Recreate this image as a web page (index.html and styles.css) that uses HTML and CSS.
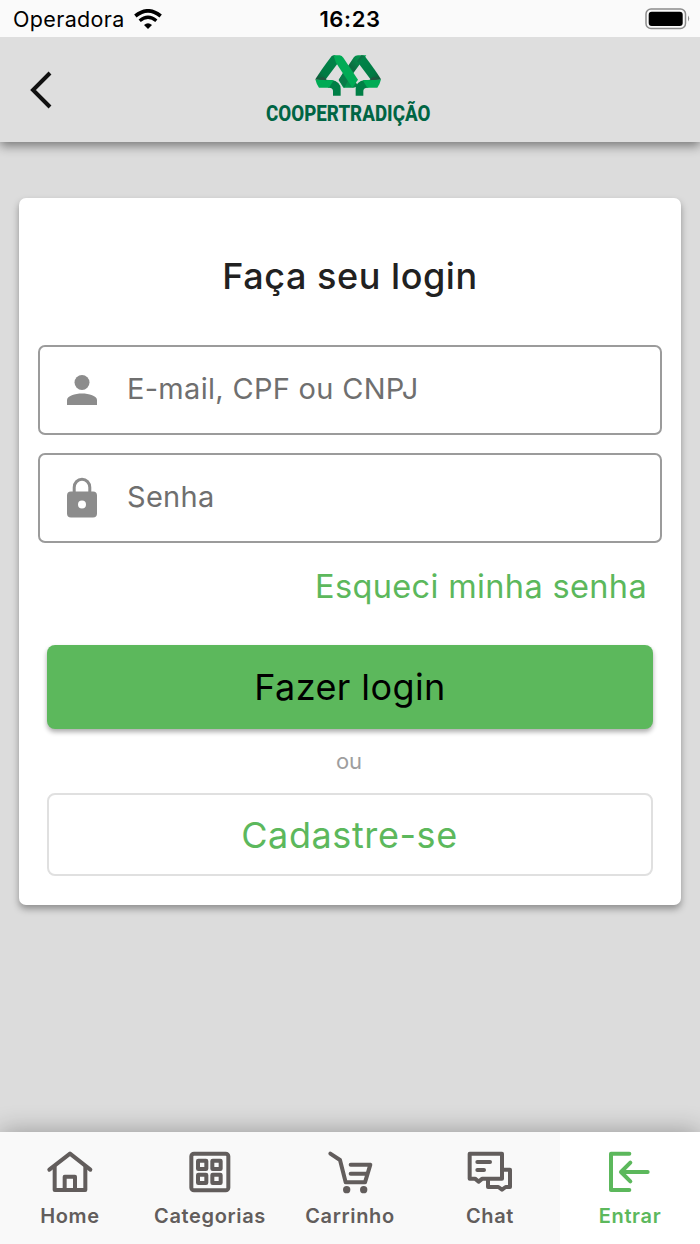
FILE: index.html
```html
<!DOCTYPE html>
<html lang="pt-BR">
<head>
    <meta charset="UTF-8">
    <meta name="viewport" content="width=device-width, initial-scale=1.0">
    <title>Coopertradição - Login</title>
    <link rel="stylesheet" href="styles.css">
</head>
<body>

    <!-- Status bar -->
    <div class="status-bar">
        <div class="status-left">
            <span class="carrier">Operadora</span>
            <svg class="wifi" width="28" height="20" viewBox="0 0 84 60">
                <path d="M4 21 Q42 -10 80 21" fill="none" stroke="#000" stroke-width="11"/>
                <path d="M17 35 Q42 14 67 35" fill="none" stroke="#000" stroke-width="10"/>
                <path d="M30 48 Q42 37 54 48 L42 60 Z" fill="#000"/>
            </svg>
        </div>
        <span class="clock">16:23</span>
        <div class="status-right">
            <svg width="45" height="22" viewBox="0 0 45 22">
                <rect x="1" y="1" width="39.5" height="19.5" rx="5" fill="none" stroke="#8c8c8c" stroke-width="1.5"/>
                <rect x="3.7" y="3.7" width="34" height="14.2" rx="3" fill="#000"/>
                <path d="M43 7.5 Q45.4 10.5 43 13.5 Z" fill="#8c8c8c"/>
            </svg>
        </div>
    </div>

    <!-- Header -->
    <div class="header">
        <a href="#" class="back-btn" aria-label="Voltar">
            <svg width="24" height="38" viewBox="0 0 24 38">
                <path d="M21 2 L4 19 L21 36" fill="none" stroke="#111" stroke-width="4"/>
            </svg>
        </a>
        <svg class="logo" width="190" height="90" viewBox="0 0 570 270">
            <defs>
                <linearGradient id="bandLeft" x1="0" y1="1" x2="1" y2="0">
                    <stop offset="0" stop-color="#164f36"/>
                    <stop offset="0.3" stop-color="#007a43"/>
                    <stop offset="0.8" stop-color="#008348"/>
                    <stop offset="1" stop-color="#23563f"/>
                </linearGradient>
                <linearGradient id="bandRight" x1="1" y1="1" x2="0" y2="0">
                    <stop offset="0" stop-color="#164f36"/>
                    <stop offset="0.3" stop-color="#007a43"/>
                    <stop offset="0.8" stop-color="#008348"/>
                    <stop offset="1" stop-color="#23563f"/>
                </linearGradient>
                <linearGradient id="bandBack" x1="1" y1="0" x2="0" y2="1">
                    <stop offset="0" stop-color="#00ab55"/>
                    <stop offset="0.45" stop-color="#0b6b40"/>
                    <stop offset="1" stop-color="#00ab55"/>
                </linearGradient>
            </defs>
            <!-- back band -->
            <path d="M297 36 Q301 31 309 31 L334 31 L280 105 L298 105 L308 121 Q303 128 296 128 L265 128 L251 105 Z" fill="url(#bandBack)"/>
            <path d="M251 105 L265 82 L280 105 L268 128 Z" fill="#087b48"/>
            <!-- outer bands -->
            <path d="M230 33 Q235 30 240 31 L253 49 L209 107 L181 103 Q196 78 230 33 Z" fill="url(#bandLeft)"/>
            <path d="M329 33 Q324 30 319 31 L306 49 L350 107 L378 103 Q363 78 329 33 Z" fill="url(#bandRight)"/>
            <!-- front band -->
            <path d="M235 31 L254 31 Q261 32 265 38 L309 104 L292 128 L243 53 Z" fill="#00ab55"/>
            <!-- trunks -->
            <path d="M218 106 L229 105 Q257 109 257 132 L257 152 L234 152 L234 137 Q233 127 219 128 Z" fill="#007f46"/>
            <path d="M341 106 L330 105 Q302 109 302 132 L302 152 L325 152 L325 137 Q326 127 340 128 Z" fill="#007f46"/>
            <path d="M181 103 L236 106 L222 128 L192 128 Q184 117 181 103 Z" fill="#00ab55"/>
            <path d="M378 103 L323 106 L337 128 L367 128 Q375 117 378 103 Z" fill="#00ab55"/>
            <path d="M181 103 L206 96 L216 106 Z" fill="#245540"/>
            <path d="M378 103 L353 96 L343 106 Z" fill="#245540"/>
            <text class="logo-text" x="33" y="227" textLength="493" lengthAdjust="spacingAndGlyphs">COOPERTRADIÇÃO</text>
        </svg>
    </div>

    <!-- Login -->
    <div class="content">
        <form class="card">
            <h1 class="title">Faça seu login</h1>

            <label class="field">
                <svg class="field-icon" width="48" height="48" viewBox="0 0 48 48">
                    <circle cx="24" cy="16.5" r="7.5" fill="#8c8c8c"/>
                    <path d="M9 39 V34 C9 30 17 27.5 24 27.5 S39 30 39 34 V39 Z" fill="#8c8c8c"/>
                </svg>
                <input class="input" type="text" placeholder="E-mail, CPF ou CNPJ">
            </label>

            <label class="field">
                <svg class="field-icon" width="48" height="48" viewBox="0 0 48 48">
                    <path d="M16.2 19 V13.5 A7.8 8.3 0 0 1 31.8 13.5 V19" fill="none" stroke="#8c8c8c" stroke-width="3"/>
                    <path fill-rule="evenodd" d="M13 17.5 H35 A4 4 0 0 1 39 21.5 V39.5 A4 4 0 0 1 35 43.5 H13 A4 4 0 0 1 9 39.5 V21.5 A4 4 0 0 1 13 17.5 Z M24 26.4 A4 4 0 1 0 24 34.4 A4 4 0 1 0 24 26.4 Z" fill="#8c8c8c"/>
                </svg>
                <input class="input" type="password" placeholder="Senha">
            </label>

            <a href="#" class="forgot">Esqueci minha senha</a>
            <button type="button" class="btn btn-login">Fazer login</button>
            <p class="or">ou</p>
            <button type="button" class="btn btn-register">Cadastre-se</button>
        </form>
    </div>

    <!-- Bottom navigation -->
    <div class="tabs">
        <a href="#" class="tab">
            <svg class="tab-icon" viewBox="0 0 144 144">
                <path d="M10 68 L72 20 L133 68"/>
                <path d="M26 60 V129 H118 V60"/>
                <path d="M56 127 V89 H87 V127"/>
            </svg>
            <span>Home</span>
        </a>
        <a href="#" class="tab">
            <svg class="tab-icon" viewBox="0 0 144 144">
                <rect x="16" y="20" width="111" height="110" rx="8"/>
                <rect x="36" y="41" width="25" height="25" rx="1"/>
                <rect x="79" y="41" width="25" height="25" rx="1"/>
                <rect x="36" y="83" width="25" height="25" rx="1"/>
                <rect x="79" y="83" width="25" height="25" rx="1"/>
            </svg>
            <span>Categorias</span>
        </a>
        <a href="#" class="tab">
            <svg class="tab-icon" viewBox="0 0 144 144">
                <path d="M13 20 L42 39 L59 106 H117 L133 53 H74 M74 80 H121"/>
                <circle class="dot" cx="62" cy="128" r="11"/>
                <circle class="dot" cx="113" cy="128" r="11"/>
            </svg>
            <span>Carrinho</span>
        </a>
        <a href="#" class="tab">
            <svg class="tab-icon" viewBox="0 0 144 144">
                <path d="M11 20 H108 V95 H49 L38 104 L27 95 H11 Z"/>
                <path d="M110 68 H132 V120 H119 L108 128 L97 120 H66 V98"/>
                <path d="M34 45 H72 M34 69 H54"/>
            </svg>
            <span>Chat</span>
        </a>
        <a href="#" class="tab active">
            <svg class="tab-icon" viewBox="0 0 144 144">
                <path d="M70 20 H15 V129 H70"/>
                <path d="M125 75 H45 M73 47 L45 75 L73 103"/>
            </svg>
            <span>Entrar</span>
        </a>
    </div>

</body>
</html>
```
FILE: styles.css
```css
* {
    box-sizing: border-box;
}

body {
    font-family: Inter, "Liberation Sans", sans-serif;
    margin: 0;
    height: 1244px;
    display: flex;
    flex-direction: column;
    background-color: #dcdcdc;
    overflow: hidden;
}

a {
    text-decoration: none;
}

svg {
    display: block;
}

.status-bar {
    position: relative;
    z-index: 1;
    height: 37px;
    padding: 0 10px 0 13px;
    display: grid;
    grid-template-columns: 1fr auto 1fr;
    align-items: center;
    background-color: #fafafa;
    color: #000;
    font-size: 21.5px;
}

.status-left {
    display: flex;
    align-items: center;
    gap: 9px;
}

.carrier {
    letter-spacing: 0.35px;
    line-height: 38px;
}

.clock {
    margin-right: 3px;
    font-size: 22px;
    font-weight: 600;
    letter-spacing: 0.6px;
    line-height: 38px;
}

.status-right {
    justify-self: end;
}

.header {
    height: 105px;
    padding: 8px 29px 0;
    display: grid;
    grid-template-columns: 1fr auto 1fr;
    align-items: start;
    background-color: #dedede;
    box-shadow: 0 4px 10px rgba(0, 0, 0, 0.45);
}

.back-btn {
    padding-top: 26px;
}

.logo {
    margin-right: 1px;
    overflow: visible;
}

.logo-text {
    font-family: Roboto, sans-serif;
    font-size: 64px;
    font-weight: 800;
    fill: #006544;
}

.content {
    flex: 1;
    padding: 56px 19px 0;
}

.card {
    height: 707px;
    padding: 0 19px;
    display: flex;
    flex-direction: column;
    background-color: #fff;
    border-radius: 7px;
    box-shadow: 0 4px 7px rgba(0, 0, 0, 0.35);
}

.title {
    margin: 55px 0 46px;
    font-size: 36px;
    line-height: 46px;
    font-weight: 500;
    letter-spacing: 0.55px;
    text-align: center;
    color: #212121;
}

.field {
    height: 90px;
    margin-bottom: 18px;
    padding: 0 20px 0 18px;
    display: flex;
    align-items: center;
    gap: 21px;
    border: 2px solid #9b9b9b;
    border-radius: 7px;
}

.input {
    flex: 1;
    padding: 0 0 3px;
    border: none;
    outline: none;
    background: none;
    font-family: inherit;
    font-size: 29px;
    letter-spacing: 0.3px;
}

.input::placeholder {
    color: #6f6f6f;
}

.forgot {
    margin: 6px 15px 38px;
    font-size: 32.5px;
    line-height: 40px;
    letter-spacing: 0.35px;
    text-align: right;
    color: #5cb85c;
}

.btn {
    height: 84px;
    margin: 0 9px;
    padding: 0;
    flex-shrink: 0;
    border: none;
    border-radius: 8px;
    font-family: inherit;
    font-size: 36px;
    letter-spacing: 0.4px;
}

.btn-login {
    background-color: #5cb85c;
    color: #000;
    box-shadow: 0 3px 5px rgba(0, 0, 0, 0.33);
}

.or {
    margin: 17px 2px 17px 0;
    font-size: 22px;
    line-height: 30px;
    text-align: center;
    color: #9e9e9e;
}

.btn-register {
    height: 83px;
    padding-right: 1px;
    background-color: #fff;
    border: 2px solid #e0e0e0;
    color: #5cb85c;
    letter-spacing: 0.6px;
}

.tabs {
    height: 112px;
    display: flex;
    background-color: #f9f9f9;
    box-shadow: 0 0 24px rgba(0, 0, 0, 0.32);
}

.tab {
    flex: 1;
    padding-top: 15px;
    display: flex;
    flex-direction: column;
    align-items: center;
    gap: 7px;
    font-size: 20px;
    line-height: 28px;
    font-weight: 600;
    letter-spacing: 0.65px;
    color: #625d5c;
}

.tab.active {
    background-color: #fff;
    color: #5cb85c;
}

.tab-icon {
    width: 48px;
    height: 48px;
    fill: none;
    stroke: currentColor;
    stroke-width: 12;
    stroke-linecap: round;
    stroke-linejoin: round;
}

.dot {
    fill: currentColor;
    stroke: none;
}
```
